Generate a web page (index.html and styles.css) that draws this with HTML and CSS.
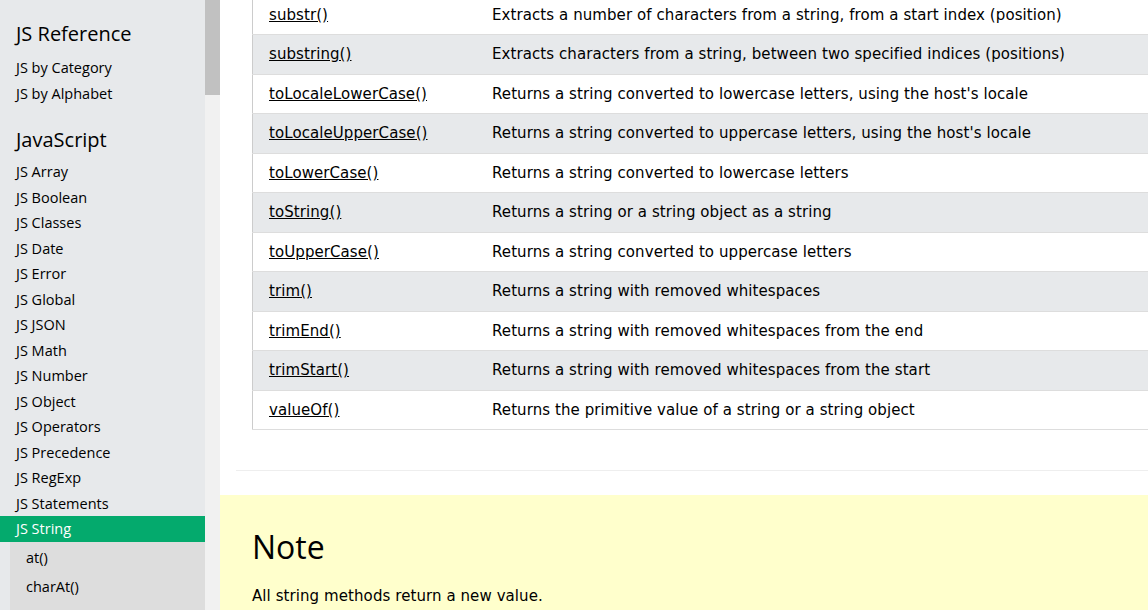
FILE: index.html
```html
<!DOCTYPE html>
<html>
<head>
<meta charset="utf-8">
<link rel="stylesheet" href="styles.css">
</head>
<body>
<div class="page">
  <nav class="sidebar">
    <h2 class="side-title">JS Reference</h2>
    <a class="side-link">JS by Category</a>
    <a class="side-link">JS by Alphabet</a>
    <h2 class="side-title side-title-2">JavaScript</h2>
    <a class="side-link">JS Array</a>
    <a class="side-link">JS Boolean</a>
    <a class="side-link">JS Classes</a>
    <a class="side-link">JS Date</a>
    <a class="side-link">JS Error</a>
    <a class="side-link">JS Global</a>
    <a class="side-link">JS JSON</a>
    <a class="side-link">JS Math</a>
    <a class="side-link">JS Number</a>
    <a class="side-link">JS Object</a>
    <a class="side-link">JS Operators</a>
    <a class="side-link">JS Precedence</a>
    <a class="side-link">JS RegExp</a>
    <a class="side-link">JS Statements</a>
    <a class="side-link active">JS String</a>
    <div class="sub-list">
      <a class="sub-link">at()</a>
      <a class="sub-link">charAt()</a>
    </div>
  </nav>
  <div class="scrollbar"><div class="thumb"></div></div>
  <main class="main">
    <div class="content">
      <table class="ref-table">
        <tr><td class="c1"><a>substr()</a></td><td>Extracts a number of characters from a string, from a start index (position)</td></tr>
        <tr><td class="c1"><a>substring()</a></td><td>Extracts characters from a string, between two specified indices (positions)</td></tr>
        <tr><td class="c1"><a>toLocaleLowerCase()</a></td><td>Returns a string converted to lowercase letters, using the host's locale</td></tr>
        <tr><td class="c1"><a>toLocaleUpperCase()</a></td><td>Returns a string converted to uppercase letters, using the host's locale</td></tr>
        <tr><td class="c1"><a>toLowerCase()</a></td><td>Returns a string converted to lowercase letters</td></tr>
        <tr><td class="c1"><a>toString()</a></td><td>Returns a string or a string object as a string</td></tr>
        <tr><td class="c1"><a>toUpperCase()</a></td><td>Returns a string converted to uppercase letters</td></tr>
        <tr><td class="c1"><a>trim()</a></td><td>Returns a string with removed whitespaces</td></tr>
        <tr><td class="c1"><a>trimEnd()</a></td><td>Returns a string with removed whitespaces from the end</td></tr>
        <tr><td class="c1"><a>trimStart()</a></td><td>Returns a string with removed whitespaces from the start</td></tr>
        <tr><td class="c1"><a>valueOf()</a></td><td>Returns the primitive value of a string or a string object</td></tr>
      </table>
    </div>
    <hr class="divider">
    <section class="note">
      <h2 class="note-title">Note</h2>
      <p class="note-text">All string methods return a new value.</p>
    </section>
  </main>
</div>
</body>
</html>
```
FILE: styles.css
```css
html, body {
  margin: 0;
  padding: 0;
  height: 100%;
  overflow: hidden;
}
body {
  font-family: "Open Sans", "Noto Sans", sans-serif;
  color: #000;
  background: #fff;
}
.page {
  display: flex;
  height: 610px;
  width: 1148px;
  overflow: hidden;
}
.sidebar {
  width: 205px;
  flex: 0 0 205px;
  background: #e7e9eb;
  display: flex;
  flex-direction: column;
}
.side-title {
  margin: 0;
  padding: 20px 16px 7px;
  font-size: 20px;
  font-weight: 400;
  line-height: 28px;
}
.side-title-2 {
  padding-top: 20px;
  padding-bottom: 5px;
}
.side-link {
  display: block;
  padding: 2px 16px;
  font-size: 14.5px;
  line-height: 21.5px;
  color: #000;
}
.side-link.active {
  background: #04aa6d;
  color: #fff;
}
.sub-list {
  margin-left: 10px;
  padding-top: 1px;
  background: #dddddd;
  flex: 1;
}
.sub-link {
  display: block;
  padding: 4px 16px;
  font-size: 14.5px;
  line-height: 21px;
  color: #000;
}
.scrollbar {
  flex: 0 0 15px;
  background: #f1f1f1;
}
.thumb {
  height: 95px;
  background: #c1c1c1;
}
.main {
  flex: 1;
  min-width: 0;
  display: flex;
  flex-direction: column;
  background: #fff;
}
.content {
  padding: 0 0 0 32px;
  margin-top: -5.5px;
}
.ref-table {
  border-collapse: collapse;
  width: 960px;
  border: 1px solid #ccc;
  font-family: "DejaVu Sans", Verdana, sans-serif;
  font-size: 15px;
  line-height: 1.5;
  letter-spacing: 0.08px;
}
.ref-table tr {
  border-bottom: 1px solid #ddd;
}
.ref-table tr:nth-child(even) {
  background: #e7e9eb;
}
.ref-table td {
  padding: 8px 8px;
  vertical-align: top;
  white-space: nowrap;
}
.ref-table td.c1 {
  padding-left: 16px;
  width: 207px;
}
.ref-table a {
  color: #000;
  text-decoration: underline;
}
.divider {
  margin: 40px 0 0 16px;
  border: 0;
  border-top: 1px solid #eee;
  height: 0;
}
.note {
  margin-top: 24px;
  background: #ffffcc;
  flex: 1;
  padding: 32px 32px 0;
}
.note-title {
  margin: 0;
  font-size: 32px;
  font-weight: 400;
  line-height: 40px;
}
.note-text {
  margin: 18px 0 0;
  font-family: "DejaVu Sans", Verdana, sans-serif;
  font-size: 15px;
  line-height: 22px;
  letter-spacing: 0.08px;
}
```
